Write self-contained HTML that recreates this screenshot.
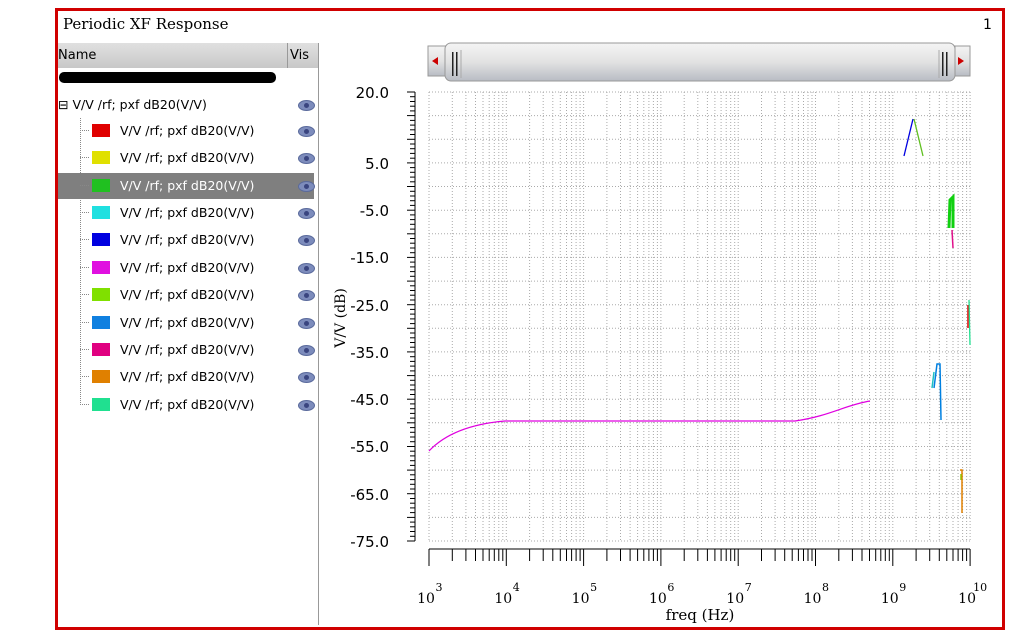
<!DOCTYPE html>
<html><head><style>
body{margin:0;width:1013px;height:632px;background:#fff;position:relative;overflow:hidden;font-family:"DejaVu Sans","Liberation Sans",sans-serif}
.frame{position:absolute;left:55px;top:8px;width:944px;height:616px;border:3px solid #d00000}
.t{position:absolute;white-space:nowrap}
.row{position:absolute;left:58px;width:256px;height:26px;font-size:12.5px;color:#000}
.row .sq{position:absolute;left:34px;top:6px;width:18px;height:13px}
.row .tx{position:absolute;left:62px;top:5px}
.eye{position:absolute;left:240px;top:8px;width:15px;height:9px;border-radius:50%;background:#7d8cbc;border:1px solid #5a6a9c}
.eye:after{content:"";position:absolute;left:5px;top:2px;width:5px;height:5px;border-radius:50%;background:#3a4580}
</style></head><body>
<div class="frame"></div>
<div class="t" style="left:63px;top:15px;font-family:'DejaVu Serif','Liberation Serif',serif;font-size:15px">Periodic XF Response</div>
<div class="t" style="left:983px;top:17px;font-size:14px">1</div>
<div style="position:absolute;left:58px;top:43px;width:260px;height:25px;background:linear-gradient(#e0e0e0,#c8c8c8)"></div>
<div style="position:absolute;left:287px;top:43px;width:1px;height:25px;background:#999"></div>
<div class="t" style="left:58px;top:48px;font-size:13px">Name</div>
<div class="t" style="left:290px;top:48px;font-size:13px">Vis</div>
<div style="position:absolute;left:318px;top:43px;width:1px;height:582px;background:#999"></div>
<div style="position:absolute;left:59px;top:72px;width:217px;height:11px;background:#000;border-radius:5px"></div>
<div style="position:absolute;left:80px;top:118px;height:287px;border-left:1px dotted #888"></div>
<div class="row" style="top:92px"><span class="t" style="left:0;top:5px">⊟ V/V /rf; pxf dB20(V/V)</span><span class="eye"></span></div>
<div id="rows"></div>
<svg style="position:absolute;left:0;top:0" width="1013" height="632" id="plot">
<defs><linearGradient id="g" x1="0" y1="0" x2="0" y2="1"><stop offset="0" stop-color="#f4f4f4"/><stop offset=".5" stop-color="#e2e2e2"/><stop offset="1" stop-color="#b8bcc4"/></linearGradient></defs>
<rect x="428" y="46" width="18" height="30" fill="url(#g)" stroke="#999"/>
<path d="M432 61 L438 57 L438 65Z" fill="#c00"/>
<rect x="445" y="43" width="510" height="38" rx="6" fill="url(#g)" stroke="#999"/>
<rect x="955" y="46" width="15" height="30" fill="url(#g)" stroke="#999"/>
<path d="M964 61 L958 57 L958 65Z" fill="#c00"/>
<rect x="452" y="52" width="1.5" height="24" fill="#222"/><rect x="456" y="52" width="1.5" height="24" fill="#222"/>
<rect x="942" y="52" width="1.5" height="24" fill="#222"/><rect x="946" y="52" width="1.5" height="24" fill="#222"/>
<line x1="461" y1="50" x2="461" y2="78" stroke="#aaa"/><line x1="939" y1="50" x2="939" y2="78" stroke="#aaa"/>
<g id="grid"></g>
<g font-size="15" fill="#000" text-anchor="end">
<text x="389" y="98">20.0</text><text x="389" y="169">5.0</text><text x="389" y="216">-5.0</text><text x="389" y="263">-15.0</text><text x="389" y="311">-25.0</text><text x="389" y="358">-35.0</text><text x="389" y="405">-45.0</text><text x="389" y="452">-55.0</text><text x="389" y="500">-65.0</text><text x="389" y="547">-75.0</text>
</g>
<text transform="translate(345,318) rotate(-90)" text-anchor="middle" font-size="14" font-family="DejaVu Serif,Liberation Serif,serif">V/V (dB)</text>
<g font-family="DejaVu Serif,Liberation Serif,serif" font-size="14" text-anchor="middle" id="xl"></g>
<text x="700" y="620" text-anchor="middle" font-size="15" font-family="DejaVu Serif,Liberation Serif,serif">freq (Hz)</text>
<path d="M429 451 C445 434 470 424 505 421 L795 421 C830 416 845 405 870 401" fill="none" stroke="#e000e0" stroke-width="1.2"/>
<path d="M904 156 L913 119" stroke="#0000e0" stroke-width="1.3" fill="none"/>
<path d="M914 119 L923 156" stroke="#60c020" stroke-width="1.3" fill="none"/>
<path d="M949 228 L950 200 L953 197 L953 228" stroke="#10d010" stroke-width="3" fill="none"/>
<path d="M952 230 L953 248" stroke="#e0108a" stroke-width="1.5" fill="none"/>
<path d="M968 305 L968 328" stroke="#e00000" stroke-width="1.5"/>
<path d="M969 300 L970 345" stroke="#20e090" stroke-width="1.3"/>
<path d="M934 388 L937 364 L940 364 L941 420" stroke="#0080e0" stroke-width="1.5" fill="none"/>
<path d="M932 388 L934 372" stroke="#20c0c0" stroke-width="1.5"/>
<path d="M960 470 L962 470 L962 513" stroke="#e08000" stroke-width="1.5" fill="none"/>
<path d="M961 474 L961 480" stroke="#90c000" stroke-width="1.5"/>
</svg>
<script>
var cols=["#e00000","#e0e000","#20c020","#20e0e0","#0000e0","#e010e0","#80e000","#1080e0","#e00080","#e08000","#20e090"];
var ys=[118,145,173,200,227,255,282,310,337,364,392];
var h="";
for(var i=0;i<11;i++){var sel=i==2;
h+='<div class="row" style="top:'+ys[i]+'px;'+(sel?'background:#7f7f7f;color:#fff':'')+'"><span class="t" style="left:22px;top:12px;width:9px;border-top:1px dotted #888"></span><span class="sq" style="background:'+cols[i]+'"></span><span class="tx t">V/V /rf; pxf dB20(V/V)</span><span class="eye"></span></div>';}
document.getElementById("rows").innerHTML=h;
var g="",x0=429,dx=77.3,y0=92,y1=541;
for(var d=0;d<7;d++)for(var k=1;k<=10;k++){var x=x0+dx*(d+Math.log10(k));if(k==10&&d<6)continue;
g+='<line x1="'+x.toFixed(1)+'" y1="'+y0+'" x2="'+x.toFixed(1)+'" y2="'+y1+'" stroke="#aaa" stroke-dasharray="1,2" />';
var L=(k==1||k==10)?17:12;
g+='<line x1="'+x.toFixed(1)+'" y1="549" x2="'+x.toFixed(1)+'" y2="'+(549+L)+'" stroke="#000" stroke-width="1"/>';}
g+='<line x1="429" y1="549" x2="970" y2="549" stroke="#000"/>';
for(var v=0;v<=95;v++){var y=y0+v*449/95;
if(v%5==0)g+='<line x1="429" y1="'+y.toFixed(1)+'" x2="970" y2="'+y.toFixed(1)+'" stroke="#aaa" stroke-dasharray="1,2"/>';
var L=v%5==0?8:5;g+='<line x1="'+(415-L)+'" y1="'+y.toFixed(1)+'" x2="415" y2="'+y.toFixed(1)+'" stroke="#000"/>';}
g+='<line x1="415" y1="92" x2="415" y2="541" stroke="#000"/>';
document.getElementById("grid").innerHTML=g;
var xl="";for(var d=0;d<8;d++){var x=x0+dx*d;xl+='<text x="'+(x-3)+'" y="603">10</text><text x="'+(x+10)+'" y="591" font-size="11">'+(d+3)+'</text>';}
document.getElementById("xl").innerHTML=xl;
</script>
</body></html>
